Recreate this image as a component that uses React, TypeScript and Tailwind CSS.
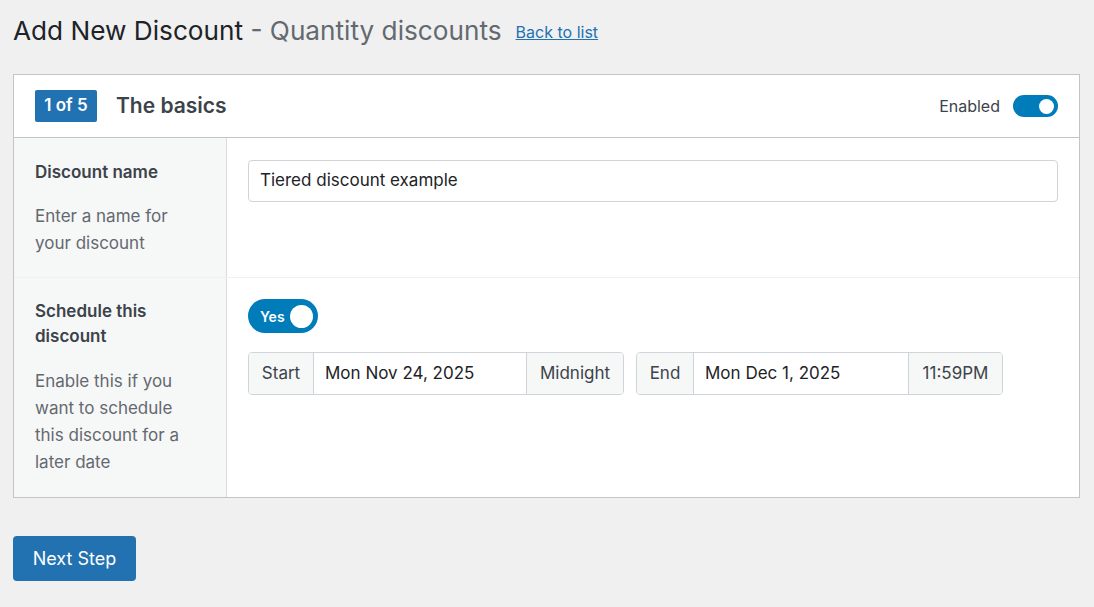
import React from "react";

const font = { fontFamily: "Inter, 'Noto Sans', 'Liberation Sans', sans-serif" };

const Toggle: React.FC = () => (
  <div className="flex h-[22px] w-[45px] items-center justify-end rounded-full bg-[#007cba] pr-[4px]">
    <div className="h-[15px] w-[15px] rounded-full bg-white" />
  </div>
);

const YesToggle: React.FC = () => (
  <div className="flex h-[34px] w-[70px] items-center justify-between rounded-full bg-[#007cba] pl-[12px] pr-[5px]">
    <span className="text-[14px] font-semibold text-white">Yes</span>
    <div className="h-[23px] w-[23px] rounded-full bg-white" />
  </div>
);

const DateGroup: React.FC<{ label: string; date: string; time: string; labelW: string; dateW: string; timeW: string }> = ({
  label,
  date,
  time,
  labelW,
  dateW,
  timeW,
}) => (
  <div className="flex h-[43px] overflow-hidden rounded-[4px] border border-[#d0d4da] text-[17px] text-[#3c434a]">
    <div className={`flex items-center justify-center border-r border-[#d0d4da] bg-[#f6f7f7] ${labelW}`}>{label}</div>
    <div className={`flex items-center bg-white px-[11px] text-[#1d2327] ${dateW}`}>{date}</div>
    <div className={`flex items-center justify-center border-l border-[#d0d4da] bg-[#f6f7f7] ${timeW}`}>{time}</div>
  </div>
);

export default function App() {
  return (
    <div style={font} className="min-h-[607px] bg-[#f0f0f1] px-[13px] pt-[14px] pb-[27px]">
      <div className="flex items-center gap-[14px]">
        <h1 className="text-[26.2px] leading-[34px] text-[#1d2327]">
          Add New Discount <span className="text-[#646970]">- Quantity discounts</span>
        </h1>
        <a href="#" className="pt-[1px] text-[16px] text-[#2271b1] underline">
          Back to list
        </a>
      </div>

      <div className="mt-[26px] w-[1067px] border border-[#c3c4c7] bg-white">
        <div className="flex h-[63px] items-center justify-between border-b border-[#c3c4c7] pl-[21px] pr-[21px]">
          <div className="flex items-center gap-[19px]">
            <div className="flex h-[32px] w-[62px] items-center justify-center rounded-[2px] bg-[#2271b1] text-[17px] font-semibold text-white">
              1 of 5
            </div>
            <div className="text-[21px] font-semibold text-[#3c434a]">The basics</div>
          </div>
          <div className="flex items-center gap-[13px]">
            <span className="text-[16px] text-[#3c434a]">Enabled</span>
            <Toggle />
          </div>
        </div>

        <div className="flex border-b border-[#f0f0f1]">
          <div className="w-[213px] shrink-0 border-r border-[#dcdcde] bg-[#f6f7f7] px-[21px] pt-[22px] pb-[20px]">
            <div className="text-[17px] leading-[25px] font-semibold text-[#3c434a]">Discount name</div>
            <div className="mt-[18px] text-[17px] leading-[27px] text-[#646970]">Enter a name for your discount</div>
          </div>
          <div className="flex-1 px-[21px] pt-[22px]">
            <div className="flex h-[42px] items-center rounded-[4px] border border-[#d0d4da] px-[11px] text-[17px] text-[#1d2327]">
              Tiered discount example
            </div>
          </div>
        </div>

        <div className="flex">
          <div className="w-[213px] shrink-0 border-r border-[#dcdcde] bg-[#f6f7f7] px-[21px] pt-[21px] pb-[21px]">
            <div className="text-[17px] leading-[25px] font-semibold text-[#3c434a]">Schedule this discount</div>
            <div className="mt-[19px] text-[17px] leading-[27px] text-[#646970]">
              Enable this if you want to schedule this discount for a later date
            </div>
          </div>
          <div className="flex-1 px-[21px] pt-[21px]">
            <YesToggle />
            <div className="mt-[19px] flex gap-[12px]">
              <DateGroup label="Start" date="Mon Nov 24, 2025" time="Midnight" labelW="w-[65px]" dateW="w-[212px]" timeW="w-[97px]" />
              <DateGroup label="End" date="Mon Dec 1, 2025" time="11:59PM" labelW="w-[57px]" dateW="w-[214px]" timeW="w-[94px]" />
            </div>
          </div>
        </div>
      </div>

      <button className="mt-[38px] flex h-[45px] w-[123px] items-center justify-center rounded-[4px] bg-[#2271b1] text-[18px] text-white">
        Next Step
      </button>
    </div>
  );
}
